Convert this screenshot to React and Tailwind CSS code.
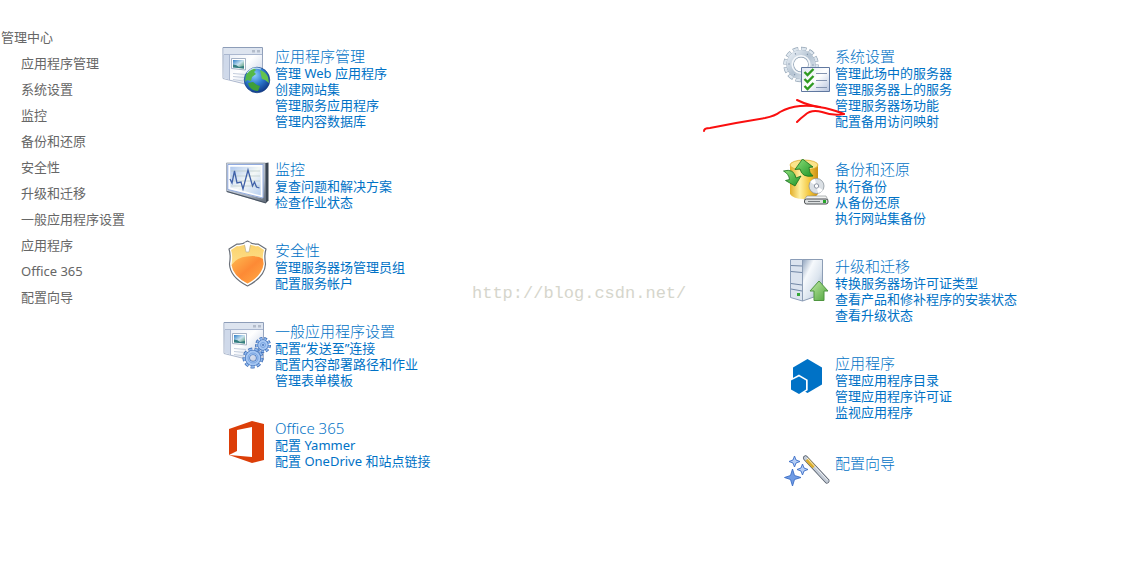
const navItems = [
  "应用程序管理",
  "系统设置",
  "监控",
  "备份和还原",
  "安全性",
  "升级和迁移",
  "一般应用程序设置",
  "应用程序",
  "Office 365",
  "配置向导",
];

function Icon({ children }) {
  return (
    <svg viewBox="0 0 50 48" className="w-[50px] h-12 shrink-0" aria-hidden="true">
      {children}
    </svg>
  );
}

function Defs() {
  return (
    <svg className="absolute w-0 h-0" aria-hidden="true">
      <defs>
        <linearGradient id="pane" x1="0" y1="0" x2="1" y2="1">
          <stop offset="0" stopColor="#dfe6f2" />
          <stop offset="0.5" stopColor="#ffffff" />
          <stop offset="1" stopColor="#b4c2dd" />
        </linearGradient>
        <linearGradient id="edge" x1="0" y1="0" x2="0" y2="1">
          <stop offset="0" stopColor="#8d9db8" />
          <stop offset="1" stopColor="#b0bbd0" />
        </linearGradient>
        <linearGradient id="photo" x1="0" y1="0" x2="1" y2="1">
          <stop offset="0" stopColor="#2f7fc8" />
          <stop offset="0.5" stopColor="#c9e3ef" />
          <stop offset="1" stopColor="#3f8a5c" />
        </linearGradient>
        <radialGradient id="ocean" cx="0.4" cy="0.3" r="0.75">
          <stop offset="0" stopColor="#8fd0ff" />
          <stop offset="0.5" stopColor="#2d79cf" />
          <stop offset="1" stopColor="#0d3482" />
        </radialGradient>
        <linearGradient id="bezel" x1="0" y1="0" x2="1" y2="1">
          <stop offset="0" stopColor="#dde2e9" />
          <stop offset="0.7" stopColor="#a9b2bf" />
          <stop offset="1" stopColor="#5d6876" />
        </linearGradient>
        <linearGradient id="screen" x1="0" y1="0" x2="1" y2="1">
          <stop offset="0" stopColor="#a9c4ee" />
          <stop offset="0.5" stopColor="#f4f8f6" />
          <stop offset="1" stopColor="#b3cdf3" />
        </linearGradient>
        <linearGradient id="shieldTop" x1="0" y1="0" x2="0" y2="1">
          <stop offset="0" stopColor="#fbd26a" />
          <stop offset="1" stopColor="#ffe9a8" />
        </linearGradient>
        <linearGradient id="shieldLow" x1="0" y1="0" x2="1" y2="1">
          <stop offset="0" stopColor="#fdbb52" />
          <stop offset="0.5" stopColor="#fd8a35" />
          <stop offset="1" stopColor="#ffac48" />
        </linearGradient>
        <linearGradient id="steel" x1="0" y1="0" x2="1" y2="1">
          <stop offset="0" stopColor="#e4ebf2" />
          <stop offset="0.5" stopColor="#b4c3d2" />
          <stop offset="1" stopColor="#dfe7ef" />
        </linearGradient>
        <linearGradient id="gold" x1="0" y1="0" x2="1" y2="0">
          <stop offset="0" stopColor="#e2ad28" />
          <stop offset="0.35" stopColor="#fff0a0" />
          <stop offset="0.7" stopColor="#f3c53a" />
          <stop offset="1" stopColor="#c98d12" />
        </linearGradient>
        <linearGradient id="leaf" x1="0" y1="0" x2="1" y2="1">
          <stop offset="0" stopColor="#8fe07a" />
          <stop offset="1" stopColor="#1f9426" />
        </linearGradient>
        <linearGradient id="upgrade" x1="0" y1="0" x2="1" y2="1">
          <stop offset="0" stopColor="#c3eaa8" />
          <stop offset="1" stopColor="#4fa53c" />
        </linearGradient>
        <linearGradient id="tower" x1="0" y1="0" x2="1" y2="1">
          <stop offset="0" stopColor="#8fa3bd" />
          <stop offset="0.3" stopColor="#f6f9fc" />
          <stop offset="0.6" stopColor="#dbe4ee" />
          <stop offset="1" stopColor="#8c9fb8" />
        </linearGradient>
      </defs>
    </svg>
  );
}

function WindowShape() {
  return (
    <>
      <path d="M2 1.5H41.5V39L36 41L2 32.5Z" fill="url(#pane)" stroke="url(#edge)" />
      <path d="M2.5 2H41V8.500H2.5Z" fill="#dde4ef" />
      <path d="M3 8.500H41M8.500 9V34" stroke="#aab7cf" fill="none" />
      <path d="M3 9H8V33.500L3 32Z" fill="#cfd9ea" />
      <path d="M31 4h3v2.500h-3zM36 4h3v2.500h-3z" fill="#b3bccb" />
      <path d="M10.500 12.500H24.500V24L10.500 22.500Z" fill="#ffffff" stroke="#8fa0b8" strokeWidth="0.800" />
      <path d="M12 14H23V22.500L12 21.500Z" fill="url(#photo)" />
      <path d="M12 18.500q4 0 6 2.500l5-1v2.500l-11-1z" fill="#347d80" />
      <path d="M12 27.500l12 1M12 30.500l11 1M12 33.500l10 1.500" stroke="#c3cddd" />
    </>
  );
}

function SiteIcon() {
  return (
    <Icon>
      <WindowShape />
      <circle cx="36" cy="34" r="12.8" fill="url(#ocean)" stroke="#123a7c" strokeWidth="0.6" />
      <path d="M25 29q3-5 8-7l2 2-2 2 2 2-4 3-1 4-4-1-2 2z" fill="#55b848" />
      <path d="M27 37l5-1 4 3 3 1-2 5q-6 0-9-5z" fill="#3f9f3a" />
      <path d="M39 24q6 2 8 7l1 6-4-3-3-1-1-4z" fill="#64c24e" />
      <path d="M26 27q5-7 14-4" stroke="#d9f1ff" strokeWidth="1.2" fill="none" opacity="0.8" />
    </Icon>
  );
}

function MonitorIcon() {
  return (
    <Icon>
      <path d="M5.500 4H44.500V43.500L42.500 43L5.500 32.500Z" fill="url(#bezel)" stroke="#8b95a3" strokeWidth="0.700" />
      <path d="M44.500 4L47.500 3.500V41.500L45 44L44.500 43.500Z" fill="#3a4552" />
      <path d="M6 32.500L45 43.800" stroke="#4a5563" strokeWidth="1.200" />
      <path d="M8 6.500H41V38L8 29.500Z" fill="url(#screen)" stroke="#ffffff" strokeWidth="2.400" strokeLinejoin="round" />
      <path d="M6.800 5.500H42V39L6.800 30.500Z" fill="none" stroke="#86a3dc" strokeWidth="0.900" strokeLinejoin="round" />
      <path d="M10 12H39M10 17H39M10 22H39M10 27H39" stroke="#b9c9c6" strokeWidth="0.700" />
      <path d="M9 20l2 4 2.500-12 2.500 12 4-1 2 7 5-19 4.500 16 2-4 2 5 3 1" fill="none" stroke="#3f61a8" strokeWidth="1.300" />
    </Icon>
  );
}

function ShieldIcon() {
  return (
    <Icon>
      <path d="M26.500 1Q32 5 37 4L45 9Q43 15 44.500 24Q44 37 26.500 46Q9 37 8.500 24Q10 15 8 9L16 4Q21 5 26.500 1Z" fill="#ffffff" stroke="#6a7079" strokeWidth="1.200" strokeLinejoin="round" />
      <path d="M26.500 3Q32 7 37 6L43 10Q41 16 42.500 24Q41 36 26.500 43.500Q12 36 10.500 24Q12 16 10 10L16 6Q21 7 26.500 3Z" fill="url(#shieldTop)" />
      <path d="M10.500 25Q16 17 26 16.500Q37 15 42 19L42.500 24Q41 36 26.500 43.500Q12 36 10.500 25Z" fill="url(#shieldLow)" />
      <path d="M23.500 2.500L25 12H28L29.500 2.500Z" fill="#ffffff" />
      <path d="M23.500 5L25 12H28L29.500 5" fill="none" stroke="#b9b29a" strokeWidth="0.700" />
    </Icon>
  );
}

function Cog({ x, y, r }) {
  return (
    <g fill="none">
      <circle cx={x} cy={y} r={r} stroke="#3c6cb5" strokeWidth="4" strokeDasharray="10 6" pathLength="144" />
      <circle cx={x} cy={y} r={r} stroke="#8db6ec" strokeWidth="2.4" strokeDasharray="8 8" strokeDashoffset="-1" pathLength="144" />
      <circle cx={x} cy={y} r={r - 3} stroke="#3c6cb5" strokeWidth="5" />
      <circle cx={x} cy={y} r={r - 3} stroke="#a5c6f2" strokeWidth="3.8" />
      <circle cx={x} cy={y} r={r - 3.5} stroke="#6f9cdc" strokeWidth="0.8" />
    </g>
  );
}

function SettingsIcon() {
  return (
    <Icon>
      <g transform="translate(1 0)">
        <WindowShape />
      </g>
      <Cog x={42} y={24} r={6} />
      <Cog x={32} y={37} r={8.5} />
    </Icon>
  );
}

function OfficeIcon() {
  return (
    <Icon>
      <path d="M8 11L31 3L43 6V42L31 45L8 37L31 39V9L16 12V33L8 37Z" fill="#dc3e08" />
    </Icon>
  );
}

function GearListIcon() {
  return (
    <Icon>
      <g fill="none">
        <circle cx="20" cy="18.500" r="15.500" stroke="#93a4b5" strokeWidth="4.500" strokeDasharray="8 4" pathLength="144" />
        <circle cx="20" cy="18.500" r="15.500" stroke="#dde6ee" strokeWidth="3.200" strokeDasharray="6.600 5.400" strokeDashoffset="-0.700" pathLength="144" />
        <circle cx="20" cy="18.500" r="10.800" stroke="#7f92a6" strokeWidth="7.400" />
        <circle cx="20" cy="18.500" r="11" stroke="url(#steel)" strokeWidth="6.800" />
        <circle cx="20" cy="18.500" r="8.800" stroke="#f4f7fa" strokeWidth="1.600" />
        <circle cx="20" cy="18.500" r="12" stroke="#7e91a6" strokeWidth="1.400" strokeDasharray="2 22" pathLength="144" />
      </g>
      <path d="M20.500 21.500H48.500V45.500H20.500Z" fill="url(#pane)" stroke="#6078a0" />
      <path d="M35 27.500H46M35 34.500H46M35 41.500H46" stroke="#8494b0" />
      <path d="M23.500 26l3 3 6-6M23.500 33l3 3 6-6M23.500 40l3 3 6-6" fill="none" stroke="#2f9a22" strokeWidth="2.400" />
    </Icon>
  );
}

function BackupIcon() {
  return (
    <Icon>
      <path d="M9 6V35Q12 40 23 40Q34 40 37 35V6Z" fill="url(#gold)" />
      <ellipse cx="23" cy="6" rx="14" ry="5" fill="#fbe48a" stroke="#d9a423" strokeWidth="0.700" />
      <path d="M21.500 0L32 8L28 8.500Q28 14 32 17Q21 19 19 10L14 10.500Z" fill="url(#leaf)" stroke="#17701d" strokeWidth="0.800" strokeLinejoin="round" />
      <path d="M2.500 12Q13 9 15 19L20 17L14 27L4.500 21.500L8.500 20.500Q8 15 2.500 12Z" fill="url(#leaf)" stroke="#17701d" strokeWidth="0.800" strokeLinejoin="round" />
      <circle cx="35.500" cy="27" r="7.500" fill="#dbe0e5" stroke="#8c949c" strokeWidth="0.800" />
      <path d="M35.500 27L29 23Q31 20 34 20ZM35.500 27L42 31Q40 34 37 34Z" fill="#ffffff" />
      <circle cx="35.500" cy="27" r="2.200" fill="#ffffff" stroke="#828b9b" strokeWidth="0.900" />
      <path d="M26 37H45L47 41H23Z" fill="#f1f2f2" stroke="#85898c" strokeWidth="0.600" />
      <rect x="23.500" y="40" width="23.500" height="5" rx="2" fill="#dcdfe0" stroke="#4b4f52" />
      <path d="M27 42.500H39" stroke="#777c80" />
      <rect x="42" y="41" width="3" height="3" fill="#27a42b" />
    </Icon>
  );
}

function ServerIcon() {
  return (
    <Icon>
      <path d="M9.500 3.500H21.500V45L9.500 41.500Z" fill="#dce4ef" stroke="#8a9db8" />
      <path d="M21.500 3.500H41.500V38L21.500 45Z" fill="url(#tower)" stroke="#8c9db5" />
      <path d="M10 9.500l11 .5M10 15.500l11 1M10 27.500l11 1.500M10 33l11 2" stroke="#7086a5" fill="none" />
      <rect x="16" y="37" width="3" height="3" fill="#35a83a" />
      <path d="M38 25L47 35H43V44.500H33V35H29Z" fill="url(#upgrade)" stroke="#4f9640" strokeLinejoin="round" />
    </Icon>
  );
}

function AppsIcon() {
  return (
    <Icon>
      <path d="M26.500 6L41 14.500V31.500L26.500 40L12 31.500V14.500Z" fill="#0072c6" />
      <path d="M18 23L25.500 27.500V36.500L18 41L10 36.500V27.500Z" fill="#0072c6" stroke="#ffffff" strokeWidth="2.400" />
      <path d="M18 23.500L25 27.500V36.500L18 41L10 36.500V27.500Z" fill="#0072c6" />
    </Icon>
  );
}

function WizardIcon() {
  return (
    <Icon>
      <g fill="#6f9be4" stroke="#3a6dc6" strokeWidth="0.900" strokeLinejoin="round">
        <path d="M11.500 19L13.500 25.500L20 27.500L13.500 29.500L11.500 36L9.500 29.500L3.500 27.500L9.500 25.500Z" />
        <path d="M13.500 6L15 10L19 11.500L15 13L13.500 17L12 13L8 11.500L12 10Z" fill="#b4cdf6" />
        <path d="M21.500 14L23 18L27 19.500L23 21L21.500 25L20 21L16 19.500L20 18Z" fill="#b4cdf6" />
      </g>
      <g strokeLinecap="round">
        <path d="M24.500 8L46 31" stroke="#4a5360" strokeWidth="5" />
        <path d="M24.500 8L46 31" stroke="#c3cbd6" strokeWidth="3.600" />
        <path d="M26 9.500L33 17" stroke="#dcae2a" strokeWidth="4" strokeLinecap="butt" />
        <path d="M26 8L46.500 30" stroke="#ffffff" strokeWidth="0.800" />
      </g>
    </Icon>
  );
}

const leftSections = [
  {
    title: "应用程序管理",
    icon: SiteIcon,
    links: ["管理 Web 应用程序", "创建网站集", "管理服务应用程序", "管理内容数据库"],
  },
  { title: "监控", icon: MonitorIcon, links: ["复查问题和解决方案", "检查作业状态"] },
  { title: "安全性", icon: ShieldIcon, links: ["管理服务器场管理员组", "配置服务帐户"] },
  {
    title: "一般应用程序设置",
    icon: SettingsIcon,
    links: ["配置“发送至”连接", "配置内容部署路径和作业", "管理表单模板"],
  },
  { title: "Office 365", icon: OfficeIcon, links: ["配置 Yammer", "配置 OneDrive 和站点链接"] },
];

const rightSections = [
  {
    title: "系统设置",
    icon: GearListIcon,
    links: ["管理此场中的服务器", "管理服务器上的服务", "管理服务器场功能", "配置备用访问映射"],
    marked: true,
  },
  { title: "备份和还原", icon: BackupIcon, links: ["执行备份", "从备份还原", "执行网站集备份"] },
  {
    title: "升级和迁移",
    icon: ServerIcon,
    links: ["转换服务器场许可证类型", "查看产品和修补程序的安装状态", "查看升级状态"],
  },
  {
    title: "应用程序",
    icon: AppsIcon,
    links: ["管理应用程序目录", "管理应用程序许可证", "监视应用程序"],
  },
  { title: "配置向导", icon: WizardIcon, links: [] },
];

// hand-drawn red arrow over the last link of a section
function RedArrow() {
  return (
    <svg
      viewBox="0 0 144 36"
      className="absolute -left-20 top-[52px] w-36 h-9 pointer-events-none"
      fill="none"
      stroke="#fa0f0f"
      strokeWidth="2"
      strokeLinecap="round"
      aria-hidden="true"
    >
      <path d="M3 33Q3 30 9 30L35 25L64 20Q74 18 79 14Q88 9 99 8Q108 7 119 9" />
      <path d="M96 2Q108 8 124 10Q136 13 143 16Q132 18 121 14Q110 11 104 17Q100 20 96 24" />
    </svg>
  );
}

function Section({ title, icon: SectionIcon, links, marked }) {
  return (
    <section className="relative flex gap-1">
      <SectionIcon />
      <div className="pt-px">
        <h2 className={links.length ? "text-[15px] leading-[18px] font-light" : "text-[15px] leading-6 font-light"}>
          <a href="#" className="hover:underline">{title}</a>
        </h2>
        <ul>
          {links.map((link) => (
            <li key={link} className="text-[13px] leading-4">
              <a href="#" className="hover:underline">{link}</a>
            </li>
          ))}
        </ul>
      </div>
      {marked && <RedArrow />}
    </section>
  );
}

function Column({ sections }) {
  return (
    <div className="flex flex-col gap-[30px]">
      {sections.map((section) => (
        <Section key={section.title} {...section} />
      ))}
    </div>
  );
}

export default function App() {
  return (
    <div className="relative flex min-h-screen bg-white whitespace-nowrap font-['Noto_Sans','Noto_Sans_CJK_SC',sans-serif]">
      <Defs />
      <nav className="w-[221px] shrink-0 pt-6 pl-px text-[13px] leading-[26px] text-[#666666]">
        <a href="#">管理中心</a>
        <ul className="pl-5">
          {navItems.map((item) => (
            <li key={item}>
              <a href="#" className="hover:underline">{item}</a>
            </li>
          ))}
        </ul>
      </nav>
      <main className="grid flex-1 grid-cols-[560fr_354fr] items-start pt-[46px] pb-10 text-[#0072c6]">
        <Column sections={leftSections} />
        <Column sections={rightSections} />
      </main>
      <p className="absolute left-[472px] top-[282px] text-[17px] leading-6 text-[#d6d6cc] font-['Liberation_Mono',monospace] pointer-events-none">
        http://blog.csdn.net/
      </p>
    </div>
  );
}
